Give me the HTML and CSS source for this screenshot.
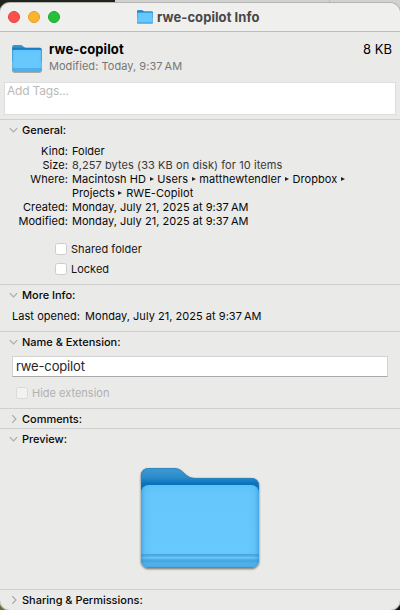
FILE: index.html
```html
<!DOCTYPE html>
<html lang="en">
<head>
<meta charset="utf-8">
<title>rwe-copilot Info</title>
<link rel="stylesheet" href="styles.css">
</head>
<body>
<svg class="defs" width="0" height="0" aria-hidden="true">
  <defs>
    <linearGradient id="back" x1="0" y1="0" x2="0" y2="1">
      <stop offset="0" stop-color="#3f9bd3"/><stop offset=".16" stop-color="#2c8bc9"/><stop offset=".26" stop-color="#0873bd"/><stop offset="1" stop-color="#0873bd"/>
    </linearGradient>
    <linearGradient id="front" x1="0" y1="0" x2="0" y2="1">
      <stop offset="0" stop-color="#60c1f7"/><stop offset=".12" stop-color="#65c7fc"/><stop offset="1" stop-color="#68c9fe"/>
    </linearGradient>
    <linearGradient id="edge" x1="0" y1="0" x2="1" y2="0">
      <stop offset="0" stop-color="#288fcd" stop-opacity=".55"/><stop offset=".035" stop-color="#409fda" stop-opacity=".16"/><stop offset=".09" stop-color="#409fda" stop-opacity="0"/><stop offset=".91" stop-color="#409fda" stop-opacity="0"/><stop offset=".965" stop-color="#409fda" stop-opacity=".16"/><stop offset="1" stop-color="#288fcd" stop-opacity=".55"/>
    </linearGradient>
    <clipPath id="front-shape"><rect x="1" y="17" width="118" height="83" rx="8"/></clipPath>
    <symbol id="folder" viewBox="0 0 120 101" preserveAspectRatio="none">
      <path fill="url(#back)" d="M1 8Q1 0 9 0H33C39 0 41 2 45 6C49 9 50 9.800 56 10H111Q119 10 119 18V60H1Z"/>
      <path fill="none" stroke="#2e7fb5" stroke-width=".7" d="M1.400 14V8Q1.400 .4 9 .4H33C39 .4 41 2.400 45 6.200C49 9.400 50 10.200 56 10.400H111Q118.600 10.400 118.600 18"/>
      <g clip-path="url(#front-shape)">
        <path fill="url(#front)" d="M1 17h118v83H1z"/>
        <path fill="#4fb0e9" d="M1 86.500h118V100H1z"/>
        <path fill="#6bc4f5" d="M1 84.700h118v1.500H1zM1 88.700h118v2H1z"/>
        <path fill="#3da1dd" d="M1 86.200h118v1H1zM1 92.500h118v1.200H1z"/>
        <path fill="#3797d2" d="M1 98.800h118v1.200H1z"/>
        <path fill="url(#edge)" d="M1 17h118v83H1z"/>
      </g>
    </symbol>
    <symbol id="down" viewBox="0 0 10 10"><path d="M1.800 3.200L5.500 7L9.200 3.200" fill="none" stroke="#aaa" stroke-width="1.150"/></symbol>
    <symbol id="right" viewBox="0 0 10 10"><path d="M4.200 1.200L8 5L4.200 8.800" fill="none" stroke="#aaa" stroke-width="1.150"/></symbol>
  </defs>
</svg>
<main class="window">
  <header class="titlebar">
    <div class="lights"><i class="light close"></i><i class="light minimize"></i><i class="light zoom"></i></div>
    <div class="title"><svg class="title-icon"><use href="#folder"/></svg><h1 class="t-title">rwe-copilot Info</h1></div>
  </header>
  <section class="summary">
    <div class="item">
      <svg class="item-icon"><use href="#folder"/></svg>
      <div class="item-text"><h2><span class="t-name">rwe-copilot</span></h2><p><span class="t-mod">Modified: Today, 9:37&#8201;AM</span></p></div>
      <span class="size">8 KB</span>
    </div>
    <div class="tags"><span class="t-tags">Add Tags...</span></div>
  </section>
  <section class="general">
    <h3><svg><use href="#down"/></svg><span>General:</span></h3>
    <dl>
      <dt>Kind:</dt><dd>Folder</dd>
      <dt>Size:</dt><dd class="soft"><span class="t-size">8,257 bytes (33 KB on disk) for 10 items</span></dd>
      <dt>Where:</dt><dd><span class="t-where">Macintosh HD <b></b> Users <b></b> matthewtendler <b></b> Dropbox <b></b></span><br><span class="t-where">Projects <b></b> RWE-Copilot</span></dd>
      <dt>Created:</dt><dd><span class="t-date">Monday, July 21, 2025 at 9:37&#8201;AM</span></dd>
      <dt>Modified:</dt><dd><span class="t-date">Monday, July 21, 2025 at 9:37&#8201;AM</span></dd>
    </dl>
    <div class="checks">
      <div class="check"><i></i><span class="t-shared">Shared folder</span></div>
      <div class="check"><i></i><span>Locked</span></div>
    </div>
  </section>
  <section class="more">
    <h3><svg><use href="#down"/></svg><span>More Info:</span></h3>
    <div class="opened"><span class="t-last">Last opened:</span><span class="t-date">Monday, July 21, 2025 at 9:37&#8201;AM</span></div>
  </section>
  <section class="extension">
    <h3><svg><use href="#down"/></svg><span>Name &amp; Extension:</span></h3>
    <div class="field"><span class="t-field">rwe-copilot</span></div>
    <div class="check disabled"><i></i><span>Hide extension</span></div>
  </section>
  <section class="comments"><h3><svg><use href="#right"/></svg><span>Comments:</span></h3></section>
  <section class="preview">
    <h3><svg><use href="#down"/></svg><span>Preview:</span></h3>
    <svg class="preview-icon"><use href="#folder"/></svg>
  </section>
  <section class="sharing"><h3><svg><use href="#right"/></svg><span>Sharing &amp; Permissions:</span></h3></section>
</main>
</body>
</html>
```
FILE: styles.css
```css
* { box-sizing: border-box; }
body {
  margin: 0;
  height: 610px;
  padding-top: 3px;
  overflow: hidden;
  background:
    linear-gradient(90deg, #20251b 115px, #d2d2d1 115px 329px, #bcbcbc 329px 330px, #d2d2d1 330px) 0 0 / 400px 20px no-repeat,
    linear-gradient(90deg, #65702b 50%, #111 50%);
  font: 11px/14px Inter, "Open Sans", sans-serif;
  color: #141414;
}
.defs { position: absolute; }
h1, h2, h3, p, dl, dd { margin: 0; }
span { white-space: nowrap; }
.window {
  height: 607px;
  border-radius: 10px;
  overflow: hidden;
  background: #eaeae9;
  box-shadow: 0 0 0 1px #b4b4b3;
}
.titlebar {
  position: relative;
  height: 29px;
  background: #efefee;
  border-bottom: 1px solid #bebebe;
}
.lights { display: flex; gap: 8px; padding: 8px; }
.light { width: 12px; height: 12px; border-radius: 50%; }
.close { background: #fe5049; border: 1px solid #df4540; }
.minimize { background: #fdb32a; border: 1px solid #dfa023; }
.zoom { background: #25c138; border: 1px solid #1fa730; }
.title { position: absolute; left: 137px; top: 6px; display: flex; align-items: center; gap: 4px; }
.title-icon { width: 16px; height: 14px; filter: drop-shadow(0 .5px .5px #0004); }
h1 { font-size: 13px; line-height: 16px; font-weight: 700; color: #474747; white-space: nowrap; }
.summary { height: 88px; padding: 9px 4px 0; border-bottom: 1px solid #cfcfcf; }
.item { display: flex; height: 41px; padding: 0 4px 0 8px; }
.item-icon { width: 30px; height: 27px; margin: 4px 7px 0 0; filter: drop-shadow(0 1px .5px #0005); }
h2 { font-size: 13px; line-height: 16px; font-weight: 700; color: #000; }
.item-text p { margin-top: 2px; color: #777; line-height: 15px; }
.size { margin-left: auto; font-size: 13px; line-height: 16px; color: #000; }
.tags { height: 33px; border: 1px solid #dedede; background: #fff; padding: 0 2px; font-size: 12px; line-height: 15px; color: #b9b9b9; }
h3 { display: flex; align-items: center; font-size: 11px; line-height: 14px; height: 20px; padding-left: 8px; font-weight: 450; letter-spacing: -.02px; color: #080808; }
h3 svg { width: 10px; height: 10px; margin-right: 4px; }
.general { height: 165px; border-bottom: 1px solid #cfcfcf; }
dl { display: grid; grid-template-columns: 68px 1fr; column-gap: 4px; padding-top: 4px; color: #080808; }
dt { text-align: right; letter-spacing: .06px; }
.soft { color: #383838; }
b { display: inline-block; margin: 0 .5px; border: solid transparent; border-width: 2px 0 2px 4px; border-left-color: #222; vertical-align: 2px; }
.checks { padding: 11px 0 0 55px; }
.check { display: flex; align-items: center; gap: 4px; height: 20px; }
.check i { width: 12px; height: 12px; border: 1px solid #cdcdcd; border-radius: 2.500px; background: #fff; }
.more { height: 47px; border-bottom: 1px solid #cfcfcf; }
.opened { display: flex; gap: 5px; padding: 4px 0 0 12px; color: #080808; }
.extension { height: 77px; border-bottom: 1px solid #cfcfcf; }
.field { height: 21px; margin: 4px 12px 6px; border: 1px solid #d3d3d3; border-bottom-color: #aaa; background: #fff; padding-left: 3px; font-size: 13px; line-height: 19px; color: #262626; }
.disabled { padding-left: 16px; color: #b1b1b1; }
.disabled i { background: #f2f2f2; border-color: #dadada; }
.comments { height: 20px; border-bottom: 1px solid #cfcfcf; }
.preview { height: 161px; border-bottom: 1px solid #cfcfcf; }
.preview-icon { display: block; width: 120px; height: 101px; margin: 19px auto 0; filter: drop-shadow(0 1px 1px #0008); }
.t-title { letter-spacing: .07px; }
.t-name { letter-spacing: .1px; }
.t-mod { letter-spacing: .04px; }
.t-tags { letter-spacing: -.2px; }
.t-size { letter-spacing: .08px; }
.t-where { letter-spacing: .07px; }
.t-date { letter-spacing: .03px; }
.t-last { letter-spacing: .05px; }
.t-shared { letter-spacing: .06px; }
.t-field { letter-spacing: -.15px; }
```
